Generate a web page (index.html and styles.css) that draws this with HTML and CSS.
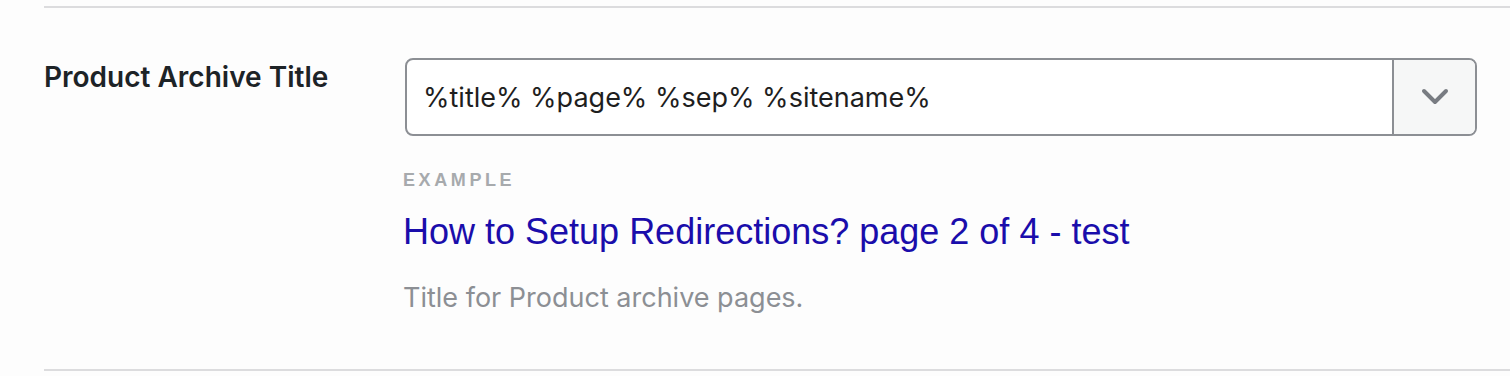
FILE: index.html
```html
<!DOCTYPE html>
<html lang="en">
    <head>
        <meta charset="UTF-8" />
        <meta name="viewport" content="width=device-width, initial-scale=1.0" />
        <title>Product Archive Title</title>
        <link rel="stylesheet" href="styles.css">
    </head>
    <body>
        <div class="field-row">
            <div class="field-label">Product Archive Title</div>

            <div class="field-body">
                <div class="select-input">
                    <div class="select-value">%title% %page% %sep% %sitename%</div>
                    <div class="select-toggle">
                        <svg viewBox="0 0 28 18" width="28" height="18">
                            <path
                                d="M 3 3 L 14 14 L 25 3"
                                fill="none"
                                stroke="#787c82"
                                stroke-width="4"
                                stroke-linecap="round"
                                stroke-linejoin="round"
                            />
                        </svg>
                    </div>
                </div>

                <div class="example-label">Example</div>
                <div class="example-title">How to Setup Redirections? page 2 of 4 - test</div>
                <div class="field-desc">Title for Product archive pages.</div>
            </div>
        </div>
    </body>
</html>
```

FILE: styles.css
```css
body {
    margin: 0;
    background-color: #fdfdfd;
    font-family: Inter, "Noto Sans", sans-serif;
}

.field-row {
    display: flex;
    margin: 6px 0 0 44px;
    padding: 50px 33px 55px 0;
    border-top: 2px solid #dcdcde;
    border-bottom: 2px solid #dcdcde;
}

.field-label {
    width: 361px;
    flex-shrink: 0;
    padding-top: 2px;
    font-size: 28px;
    font-weight: 600;
    color: #1d2327;
}

.field-body {
    flex: 1;
}

.select-input {
    display: flex;
    height: 78px;
    border: 2px solid #8c8f94;
    border-radius: 8px;
    box-sizing: border-box;
    background-color: #fff;
    overflow: hidden;
}

.select-value {
    flex: 1;
    display: flex;
    align-items: center;
    padding-left: 16px;
    font-size: 27px;
    color: #1e1e1e;
}

.select-toggle {
    width: 81px;
    display: flex;
    align-items: center;
    justify-content: center;
    border-left: 2px solid #8c8f94;
    background-color: #f6f7f7;
}

.example-label {
    margin: 34px 0 0 -2px;
    font-family: "Liberation Sans", Arial, sans-serif;
    font-size: 18px;
    font-weight: bold;
    letter-spacing: 3.6px;
    text-transform: uppercase;
    color: #a7aaad;
}

.example-title {
    margin: 20px 0 0 -2px;
    font-family: "Liberation Sans", Arial, sans-serif;
    font-size: 36px;
    color: #1a0dab;
}

.field-desc {
    margin: 28px 0 0 -2px;
    font-size: 27px;
    color: #8c8f94;
}
```
